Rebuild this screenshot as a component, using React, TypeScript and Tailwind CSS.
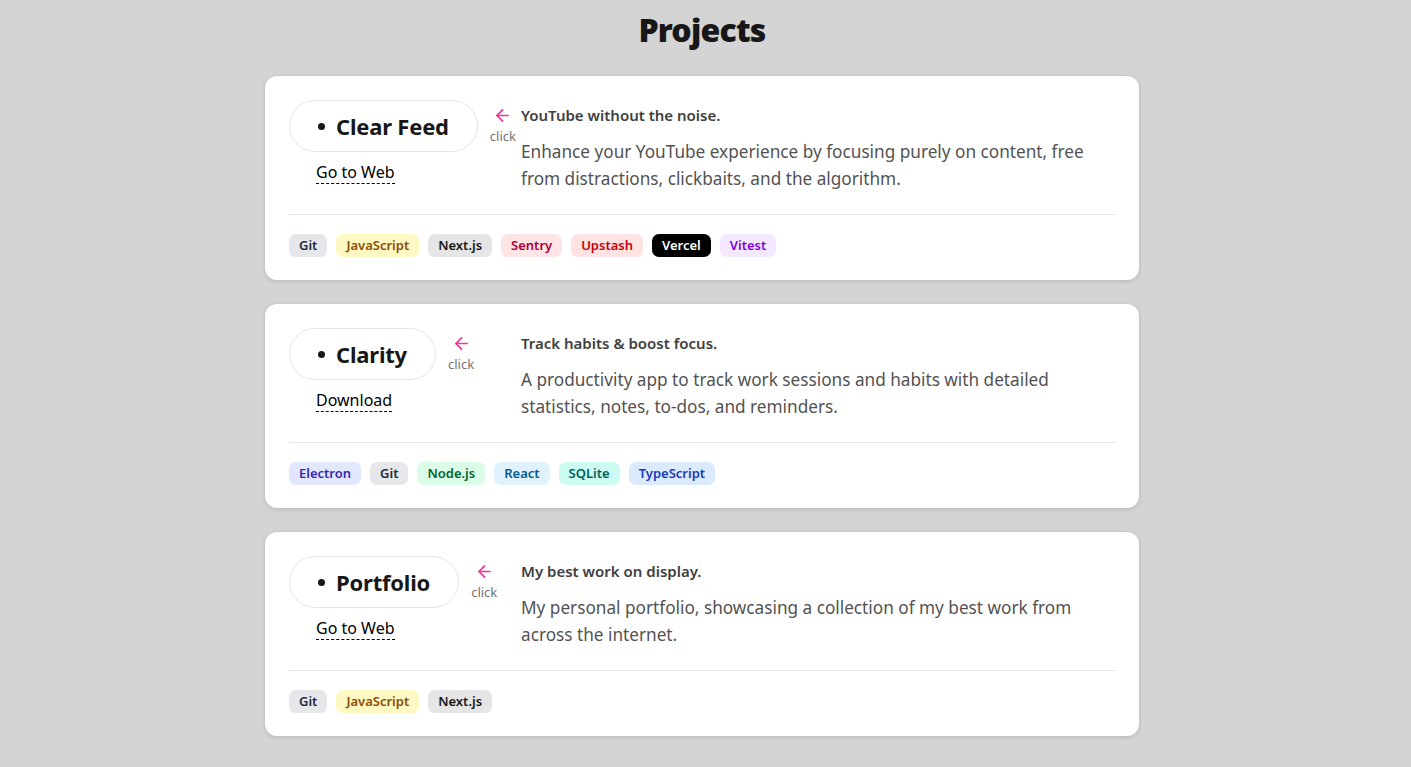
import { ArrowLeft } from "lucide-react";

type Tag = { name: string; cls: string };

const projects: {
  name: string;
  link: string;
  title: string;
  desc: string;
  tags: Tag[];
}[] = [
  {
    name: "Clear Feed",
    link: "Go to Web",
    title: "YouTube without the noise.",
    desc: "Enhance your YouTube experience by focusing purely on content, free from distractions, clickbaits, and the algorithm.",
    tags: [
      { name: "Git", cls: "bg-gray-200 text-gray-800" },
      { name: "JavaScript", cls: "bg-yellow-100 text-yellow-800" },
      { name: "Next.js", cls: "bg-neutral-200 text-neutral-900" },
      { name: "Sentry", cls: "bg-rose-100 text-rose-800" },
      { name: "Upstash", cls: "bg-red-100 text-red-700" },
      { name: "Vercel", cls: "bg-black text-white" },
      { name: "Vitest", cls: "bg-purple-100 text-purple-700" },
    ],
  },
  {
    name: "Clarity",
    link: "Download",
    title: "Track habits & boost focus.",
    desc: "A productivity app to track work sessions and habits with detailed statistics, notes, to-dos, and reminders.",
    tags: [
      { name: "Electron", cls: "bg-indigo-100 text-indigo-800" },
      { name: "Git", cls: "bg-gray-200 text-gray-800" },
      { name: "Node.js", cls: "bg-green-100 text-green-800" },
      { name: "React", cls: "bg-sky-100 text-sky-800" },
      { name: "SQLite", cls: "bg-teal-100 text-teal-800" },
      { name: "TypeScript", cls: "bg-blue-100 text-blue-800" },
    ],
  },
  {
    name: "Portfolio",
    link: "Go to Web",
    title: "My best work on display.",
    desc: "My personal portfolio, showcasing a collection of my best work from across the internet.",
    tags: [
      { name: "Git", cls: "bg-gray-200 text-gray-800" },
      { name: "JavaScript", cls: "bg-yellow-100 text-yellow-800" },
      { name: "Next.js", cls: "bg-neutral-200 text-neutral-900" },
    ],
  },
];

function ProjectCard({ p }: { p: (typeof projects)[number] }) {
  return (
    <div className="rounded-xl bg-white px-6 pt-6 pb-[23px] shadow-[0_1px_4px_rgba(0,0,0,0.15)]">
      <div className="flex items-start">
        <div className="w-[232px] shrink-0">
          <div className="flex items-start gap-3 whitespace-nowrap">
            <div className="flex h-[52px] items-center gap-[11px] rounded-full border border-neutral-200 px-7">
              <span className="h-[7px] w-[7px] shrink-0 rounded-full bg-neutral-900" />
              <span className="text-[22px] font-bold tracking-[-0.2px] text-neutral-900">{p.name}</span>
            </div>
            <div className="mt-[6px] flex flex-col items-center">
              <ArrowLeft className="h-[19px] w-[19px] text-pink-500" strokeWidth={2.2} />
              <span className="mt-[2px] text-[13px] leading-[18px] text-neutral-500">click</span>
            </div>
          </div>
          <div className="mt-2 pl-[27px]">
            <span className="border-b border-dashed border-black text-[16px] leading-[23px] text-black">
              {p.link}
            </span>
          </div>
        </div>
        <div className="flex-1 pt-[3px]">
          <div className="text-[15px] font-semibold leading-6 text-neutral-700">{p.title}</div>
          <div className="mt-[11px] text-[17.2px] leading-[27px] text-neutral-600">{p.desc}</div>
        </div>
      </div>
      <div className="mt-[22px] border-t border-neutral-200" />
      <div className="mt-[19px] flex flex-wrap gap-[9px]">
        {p.tags.map((t) => (
          <span
            key={t.name}
            className={`rounded-[7px] px-[10px] text-[13px] font-semibold leading-[23px] ${t.cls}`}
          >
            {t.name}
          </span>
        ))}
      </div>
    </div>
  );
}

export default function App() {
  return (
    <div className="min-h-screen bg-[#d4d4d4] pr-[7px] font-['Noto_Sans',sans-serif]">
      <h1 className="pt-[8px] text-center text-[32px] font-black leading-[44px] tracking-tight text-neutral-900">
        Projects
      </h1>
      <div className="mx-auto mt-[24px] flex w-[874px] flex-col gap-6">
        {projects.map((p) => (
          <ProjectCard key={p.name} p={p} />
        ))}
      </div>
    </div>
  );
}
